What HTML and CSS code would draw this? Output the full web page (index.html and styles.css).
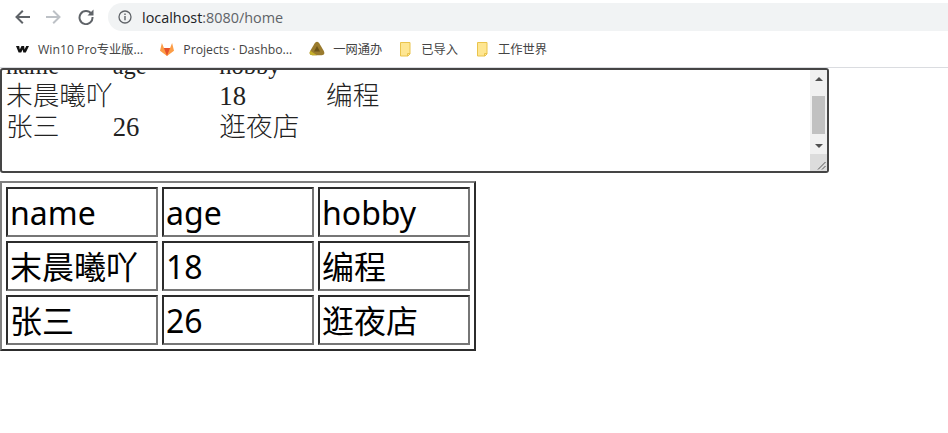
FILE: index.html
```html
<!DOCTYPE html>
<html lang="zh">
<head>
<meta charset="utf-8">
<title>home</title>
<link rel="stylesheet" href="styles.css">
</head>
<body>
<header class="chrome">
  <div class="toolbar">
    <svg class="nav" viewBox="0 0 16 16"><path d="M16 8H2.500M8.800 1.700 2.500 8l6.300 6.300" fill="none" stroke="#5f6368" stroke-width="2"/></svg>
    <svg class="nav" viewBox="0 0 16 16"><path d="M0 8h13.500M7.200 1.700 13.500 8l-6.300 6.300" fill="none" stroke="#bdc1c6" stroke-width="2"/></svg>
    <svg class="nav" viewBox="0 0 16 16"><path d="M13.300 4.800A6.500 6.500 0 1 0 14.500 8" fill="none" stroke="#5f6368" stroke-width="2"/><path d="M9.500 6.500h6V.5z" fill="#5f6368"/></svg>
    <div class="omnibox">
      <svg class="info" viewBox="0 0 14 14"><circle cx="7" cy="7" r="6" fill="none" stroke="#5f6368" stroke-width="1.300"/><path d="M7 6v4.200M7 3.500v1.400" stroke="#5f6368" stroke-width="1.400"/></svg>
      <span class="url"><span class="host">localhost</span>:8080/home</span>
    </div>
  </div>
  <nav class="bookmarks">
    <a class="mark mark-w"><svg class="fav" viewBox="0 0 16 16"><path d="M2 5h3.200l.6 3.500L7.500 5h2.600l.5 3.500L12.200 5H15l-3.200 6.500H9.300l-.6-3-1.500 3H4.600z" fill="#111"/></svg><span>Win10 Pro专业版...</span></a>
    <a class="mark mark-g"><svg class="fav" viewBox="0 0 16 16"><path d="M8 15 1 9.800 2.900 2l2 5h6.200l2-5L15 9.800z" fill="#fc9d46"/><path d="M8 15 4.900 7h6.200z" fill="#e6502a"/></svg><span>Projects · Dashbo...</span></a>
    <a class="mark mark-y"><svg class="fav" viewBox="0 0 16 16"><path d="M8 .8c1.300 0 2 1 3 2.700l3.700 6.300c1.300 2.500.5 4.400-2 4.400H3.300c-2.500 0-3.300-1.900-2-4.400L5 3.500C6 1.800 6.700.8 8 .8z" fill="#9a7b2e"/><path d="M8 5l3 5.500H5z" fill="#6d5518"/><path d="M1.300 9.800c-1.300 2.500-.5 4.400 2 4.400H8z" fill="#c6b02a"/></svg><span>一网通办</span></a>
    <a class="mark mark-f"><svg class="fav" viewBox="0 0 16 16"><path d="M3.500 1.500h9.500v11.500l-2 2H3.500z" fill="#fee692" stroke="#eac44c"/><path d="M10.500 15v-2.500h2.500" fill="none" stroke="#eac44c"/></svg><span>已导入</span></a>
    <a class="mark"><svg class="fav" viewBox="0 0 16 16"><path d="M3.500 1.500h9.500v11.500l-2 2H3.500z" fill="#fee692" stroke="#eac44c"/><path d="M10.500 15v-2.500h2.500" fill="none" stroke="#eac44c"/></svg><span>工作世界</span></a>
  </nav>
</header>
<main>
  <div class="textarea">
    <pre class="text"><span class="head">name	age	hobby</span>
末晨曦吖	18	编程
张三	26	逛夜店
</pre>
    <div class="scrollbar">
      <div class="arrow"><i class="tri-up"></i></div>
      <div class="track"><div class="thumb"></div></div>
      <div class="arrow"><i class="tri-down"></i></div>
      <div class="corner">
        <svg viewBox="0 0 17 17"><path d="M15.500 8 8 15.500M15.500 12 12 15.500" stroke="#555" fill="none"/></svg>
      </div>
    </div>
  </div>
  <table class="data">
    <tr><td>name</td><td>age</td><td>hobby</td></tr>
    <tr><td>末晨曦吖</td><td>18</td><td>编程</td></tr>
    <tr><td>张三</td><td>26</td><td>逛夜店</td></tr>
  </table>
</main>
</body>
</html>
```
FILE: styles.css
```css
* { box-sizing: border-box; }
html, body { margin: 0; padding: 0; background: #fff; }
body { width: 948px; height: 433px; overflow: hidden; font-family: "Open Sans", "Noto Sans CJK SC", sans-serif; }

.chrome { height: 68px; border-bottom: 1px solid #dadce0; }
.toolbar { height: 31px; padding-top: 3px; padding-left: 14px; display: flex; align-items: flex-start; }
.nav { width: 16px; height: 16px; margin-top: 6px; margin-right: 16px; flex: none; }
.nav:nth-child(3) { margin-right: 14px; }
.omnibox { flex: 1; height: 28px; background: #f1f3f4; border-radius: 14px 0 0 14px; display: flex; align-items: center; padding-left: 10px; }
.info { width: 14px; height: 14px; margin-right: 10px; flex: none; }
.url { font-family: "Open Sans", sans-serif; font-size: 14.4px; color: #5f6368; white-space: nowrap; }
.host { color: #202124; }

.bookmarks { height: 36px; display: flex; align-items: center; padding-left: 14px; }
.mark { display: flex; align-items: center; gap: 8px; font-size: 12.25px; color: #444; white-space: nowrap; margin-right: 16px; font-family: "Open Sans", "Noto Sans CJK SC", sans-serif; }
.fav { width: 16px; height: 16px; flex: none; }
.mark-g { margin-right: 17px; }
.mark-y { margin-right: 15px; }

.textarea { width: 829px; height: 105px; border: 2px solid #454545; border-radius: 3px; display: flex; overflow: hidden; }
.text { flex: 1; margin: -20px 0 0; padding: 0 5px 0 4px; font-family: "Liberation Serif", "Noto Sans CJK SC", serif; font-size: 26.67px; line-height: 31px; tab-size: 106.67px; color: #222; font-weight: 300; }
.head { font-size: 24.5px; }
.scrollbar { width: 17px; flex: none; background: #f1f1f1; display: flex; flex-direction: column; }
.arrow { height: 17px; display: flex; align-items: center; justify-content: center; flex: none; }
.tri-up, .tri-down { width: 0; height: 0; border-left: 4px solid transparent; border-right: 4px solid transparent; }
.tri-up { border-bottom: 4px solid #505050; }
.tri-down { border-top: 4px solid #505050; }
.track { flex: 1; padding: 9px 2px 0; }
.thumb { height: 38px; background: #c1c1c1; }
.corner { height: 17px; background: #dcdcdc; flex: none; }
.corner svg { width: 17px; height: 17px; display: block; }

.data { margin-top: 8px; border: 2px solid; border-color: #808080 #2c2c2c #2c2c2c #808080; border-spacing: 4px; border-collapse: separate; }
.data td { width: 152px; height: 50px; padding: 3px 2px 0; vertical-align: top; border: 2px solid; border-color: #2c2c2c #767676 #767676 #2c2c2c; font-size: 32px; line-height: 41px; color: #000; white-space: nowrap; font-family: "Noto Sans", "Noto Sans CJK SC", sans-serif; }
```
